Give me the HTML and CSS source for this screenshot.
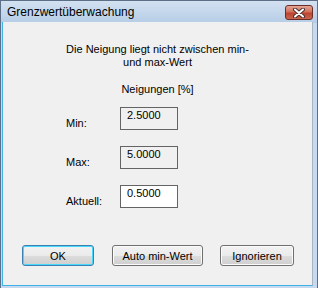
FILE: index.html
```html
<!DOCTYPE html>
<html lang="de">
<head>
    <meta charset="UTF-8">
    <title>Grenzwertüberwachung</title>
    <link rel="stylesheet" href="styles.css">
</head>
<body>
    <div class="window">
        <div class="titlebar">
            <span class="title">Grenzwertüberwachung</span>
            <div class="close">
                <svg width="14" height="10" viewBox="0 0 14 10">
                    <path d="M3 1.5 L11 8.5 M11 1.5 L3 8.5" stroke="#4a3030" stroke-width="4" stroke-linecap="round"/>
                    <path d="M3 1.5 L11 8.5 M11 1.5 L3 8.5" stroke="#ffffff" stroke-width="2" stroke-linecap="round"/>
                </svg>
            </div>
        </div>

        <div class="client">
            <p class="message">Die Neigung liegt nicht zwischen min-<br>und max-Wert</p>
            <p class="unit">Neigungen [%]</p>

            <div class="fields">
                <div class="row">
                    <span class="label">Min:</span>
                    <div class="value">2.5000</div>
                </div>
                <div class="row">
                    <span class="label">Max:</span>
                    <div class="value">5.0000</div>
                </div>
                <div class="row row-last">
                    <span class="label">Aktuell:</span>
                    <div class="value editable">0.5000</div>
                </div>
            </div>

            <div class="buttons">
                <button class="btn btn-default btn-ok">OK</button>
                <button class="btn btn-auto">Auto min-Wert</button>
                <button class="btn btn-ignore">Ignorieren</button>
            </div>
        </div>
    </div>
</body>
</html>
```

FILE: styles.css
```css
body {
    margin: 0;
    padding: 0;
    font-family: 'Liberation Sans', Arial, sans-serif;
    font-size: 11px;
    color: #000;
    background-color: #c8daee;
}

.window {
    width: 318px;
    height: 288px;
    box-sizing: border-box;
    display: flex;
    flex-direction: column;
    border-left: 1px solid #5d6f86;
    border-top: 1px solid #5d6f86;
    border-right: 1px solid #5d6f86;
    background: linear-gradient(#d3e1f1, #b6cde6 22px, #c6d9ee 22px);
    overflow: hidden;
}

.titlebar {
    height: 21px;
    display: flex;
    align-items: flex-start;
    justify-content: space-between;
}

.title {
    font-size: 12px;
    padding-left: 6px;
    padding-top: 4px;
    line-height: 14px;
}

.close {
    width: 26px;
    height: 13px;
    margin-top: 4px;
    margin-right: 4px;
    border: 1px solid #6a2e26;
    border-radius: 3px;
    background: linear-gradient(#e3a595, #d2715e 45%, #bd4330 55%, #c9654f);
    display: flex;
    align-items: center;
    justify-content: center;
}

.client {
    flex: 1;
    margin-left: 1px;
    margin-right: 4px;
    margin-bottom: 2px;
    background-color: #f0f0f0;
    border-left: 1px solid #3fb3e3;
    border-bottom: 1px solid #3fb3e3;
    border-right: 1px solid #a9b4c0;
}

.message {
    margin: 21px 0 0 0;
    text-align: center;
    line-height: 13px;
}

.unit {
    margin: 14px 0 0 0;
    text-align: center;
    line-height: 13px;
}

.fields {
    margin-top: 11px;
    padding-left: 63px;
}

.row {
    display: flex;
    align-items: flex-end;
    margin-bottom: 16px;
}

.row-last {
    margin-bottom: 0;
}

.label {
    width: 54px;
    line-height: 13px;
}

.value {
    width: 50px;
    height: 17px;
    border: 1px solid #646464;
    padding: 1px 0 3px 6px;
    line-height: 13px;
}

.editable {
    background-color: #fff;
}

.buttons {
    display: flex;
    margin-top: 37px;
    padding-left: 19px;
}

.btn {
    height: 21px;
    box-sizing: border-box;
    padding: 0;
    font-family: 'Liberation Sans', Arial, sans-serif;
    font-size: 11px;
    color: #000;
    border: 1px solid #707070;
    border-radius: 3px;
    background: linear-gradient(#f2f2f2, #ebebeb 50%, #dddddd 50%, #cfcfcf);
    box-shadow: inset 0 0 0 1px #fbfbfb;
}

.btn-default {
    border-color: #3c7fb1;
    box-shadow: inset 0 0 0 1px #48d8fb;
}

.btn-ok {
    width: 72px;
}

.btn-auto {
    width: 91px;
    margin-left: 18px;
}

.btn-ignore {
    width: 74px;
    margin-left: 17px;
}
```
